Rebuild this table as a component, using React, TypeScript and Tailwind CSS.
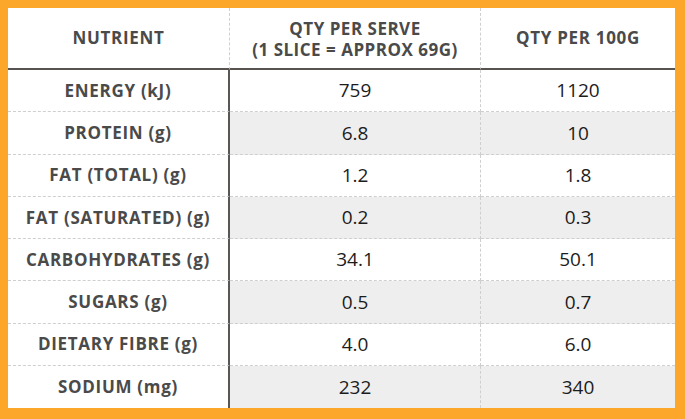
const rows = [
  { name: "ENERGY (kJ)", serve: "759", per100: "1120" },
  { name: "PROTEIN (g)", serve: "6.8", per100: "10" },
  { name: "FAT (TOTAL) (g)", serve: "1.2", per100: "1.8" },
  { name: "FAT (SATURATED) (g)", serve: "0.2", per100: "0.3" },
  { name: "CARBOHYDRATES (g)", serve: "34.1", per100: "50.1" },
  { name: "SUGARS (g)", serve: "0.5", per100: "0.7" },
  { name: "DIETARY FIBRE (g)", serve: "4.0", per100: "6.0" },
  { name: "SODIUM (mg)", serve: "232", per100: "340" },
];

export default function App() {
  return (
    <div className="w-[685px] h-[419px] bg-[#fca62a] pt-2 pl-2 pr-[10px] pb-[11px] font-['Open_Sans',sans-serif]">
      <div className="bg-white h-full grid grid-cols-[222px_251px_1fr] grid-rows-[62px_repeat(8,1fr)]">
        <div className="flex items-center justify-center border-b-2 border-r border-b-[#575350] border-r-[#cfcfcf] [border-right-style:dashed] text-[17px] tracking-[0.7px] font-bold text-[#4a4a4a]">
          NUTRIENT
        </div>
        <div className="flex flex-col items-center justify-center border-b-2 border-r border-b-[#575350] border-r-[#cfcfcf] [border-right-style:dashed] text-[17px] tracking-[0.5px] font-bold text-[#4a4a4a] leading-[21px] pt-0.5">
          <span>QTY PER SERVE</span>
          <span>(1 SLICE = APPROX 69G)</span>
        </div>
        <div className="flex items-center justify-center border-b-2 border-b-[#575350] text-[17px] tracking-[0.7px] font-bold text-[#4a4a4a]">
          QTY PER 100G
        </div>
        {rows.map((r, i) => {
          const last = i === rows.length - 1;
          const striped = i % 2 === 1;
          return (
            <div key={r.name} className="contents">
              <div
                className={
                  "flex items-center justify-center border-r-2 border-r-[#5a5653] text-[17px] tracking-[0.7px] font-bold text-[#4a4a4a] " +
                  (last ? "" : "border-b border-b-[#cfcfcf] [border-bottom-style:dashed]")
                }
              >
                {r.name}
              </div>
              <div
                className={
                  "flex items-center justify-center border-r border-dashed border-r-[#cfcfcf] text-[19px] text-[#1c1c1c] " +
                  (striped ? "bg-[#eeeeee] " : "") +
                  (last ? "" : "border-b border-b-[#cfcfcf]")
                }
              >
                {r.serve}
              </div>
              <div
                className={
                  "flex items-center justify-center text-[19px] text-[#1c1c1c] " +
                  (striped ? "bg-[#eeeeee] " : "") +
                  (last ? "" : "border-b border-dashed border-b-[#cfcfcf]")
                }
              >
                {r.per100}
              </div>
            </div>
          );
        })}
      </div>
    </div>
  );
}
